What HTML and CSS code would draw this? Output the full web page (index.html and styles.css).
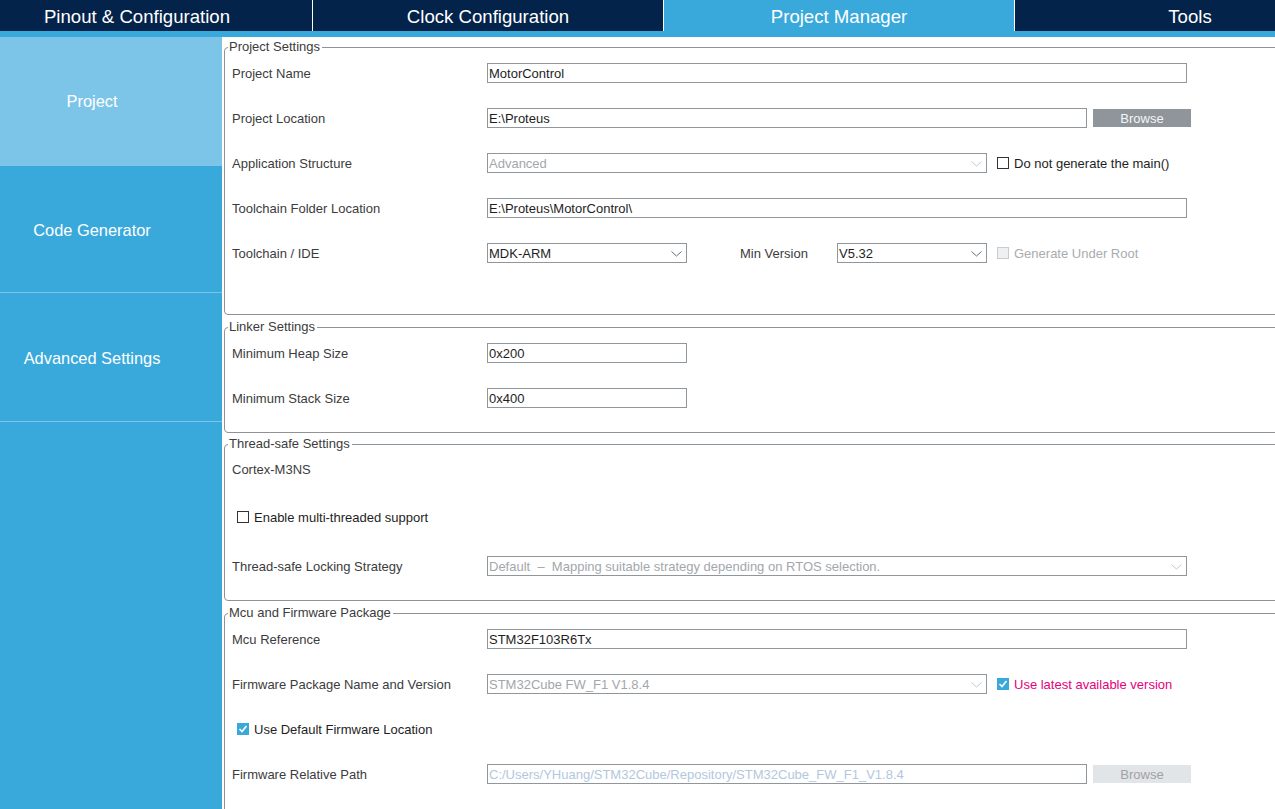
FILE: index.html
```html
<!DOCTYPE html>
<html>
<head>
<meta charset="utf-8">
<link rel="stylesheet" href="styles.css">
</head>
<body>
<div class="tabs">
  <div class="tab">Pinout &amp; Configuration</div>
  <div class="tab">Clock Configuration</div>
  <div class="tab active">Project Manager</div>
  <div class="tab">Tools</div>
</div>
<div class="strip"></div>
<div class="body">
  <nav class="side">
    <div class="item active i1">Project</div>
    <div class="item i2">Code Generator</div>
    <div class="item i3">Advanced Settings</div>
  </nav>
  <main class="content">
    <fieldset class="group g1">
      <legend>Project Settings</legend>
      <div class="row">
        <div class="label">Project Name</div>
        <div class="field w700">MotorControl</div>
      </div>
      <div class="row">
        <div class="label">Project Location</div>
        <div class="field w600">E:\Proteus</div>
        <div class="btn">Browse</div>
      </div>
      <div class="row">
        <div class="label">Application Structure</div>
        <div class="field select w500 disabled">Advanced<svg class="chev" width="11" height="6" viewBox="0 0 11 6"><polyline points="0.5,0.5 5.5,5 10.5,0.5" fill="none" stroke="#c4c7ca" stroke-width="1"/></svg></div>
        <div class="check"><span class="box"></span><span class="ctext">Do not generate the main()</span></div>
      </div>
      <div class="row">
        <div class="label">Toolchain Folder Location</div>
        <div class="field w700">E:\Proteus\MotorControl\</div>
      </div>
      <div class="row">
        <div class="label">Toolchain / IDE</div>
        <div class="field select w200">MDK-ARM<svg class="chev" width="11" height="6" viewBox="0 0 11 6"><polyline points="0.5,0.5 5.5,5 10.5,0.5" fill="none" stroke="#6a6f74" stroke-width="1"/></svg></div>
        <div class="label minv">Min Version</div>
        <div class="field select w150">V5.32<svg class="chev" width="11" height="6" viewBox="0 0 11 6"><polyline points="0.5,0.5 5.5,5 10.5,0.5" fill="none" stroke="#6a6f74" stroke-width="1"/></svg></div>
        <div class="check dis"><span class="box"></span><span class="ctext">Generate Under Root</span></div>
      </div>
    </fieldset>

    <fieldset class="group g2">
      <legend>Linker Settings</legend>
      <div class="row">
        <div class="label">Minimum Heap Size</div>
        <div class="field w200">0x200</div>
      </div>
      <div class="row">
        <div class="label">Minimum Stack Size</div>
        <div class="field w200">0x400</div>
      </div>
    </fieldset>

    <fieldset class="group g3">
      <legend>Thread-safe Settings</legend>
      <div class="row">
        <div class="label">Cortex-M3NS</div>
      </div>
      <div class="row r-check">
        <div class="check"><span class="box"></span><span class="ctext">Enable multi-threaded support</span></div>
      </div>
      <div class="row r-lock">
        <div class="label">Thread-safe Locking Strategy</div>
        <div class="field select w700 disabled">Default &nbsp;&#8211;&nbsp; Mapping suitable strategy depending on RTOS selection.<svg class="chev" width="11" height="6" viewBox="0 0 11 6"><polyline points="0.5,0.5 5.5,5 10.5,0.5" fill="none" stroke="#c4c7ca" stroke-width="1"/></svg></div>
      </div>
    </fieldset>

    <fieldset class="group g4">
      <legend>Mcu and Firmware Package</legend>
      <div class="row">
        <div class="label">Mcu Reference</div>
        <div class="field w700">STM32F103R6Tx</div>
      </div>
      <div class="row">
        <div class="label">Firmware Package Name and Version</div>
        <div class="field select w500 disabled">STM32Cube FW_F1 V1.8.4<svg class="chev" width="11" height="6" viewBox="0 0 11 6"><polyline points="0.5,0.5 5.5,5 10.5,0.5" fill="none" stroke="#c4c7ca" stroke-width="1"/></svg></div>
        <div class="check pink"><span class="box on"><svg width="12" height="12" viewBox="0 0 12 12"><polyline points="2.5,6 5,8.5 9.5,3" fill="none" stroke="#fff" stroke-width="1.6"/></svg></span><span class="ctext">Use latest available version</span></div>
      </div>
      <div class="row">
        <div class="check"><span class="box on"><svg width="12" height="12" viewBox="0 0 12 12"><polyline points="2.5,6 5,8.5 9.5,3" fill="none" stroke="#fff" stroke-width="1.6"/></svg></span><span class="ctext">Use Default Firmware Location</span></div>
      </div>
      <div class="row">
        <div class="label">Firmware Relative Path</div>
        <div class="field w600 path">C:/Users/YHuang/STM32Cube/Repository/STM32Cube_FW_F1_V1.8.4</div>
        <div class="btn btn-dis">Browse</div>
      </div>
    </fieldset>
  </main>
</div>
</body>
</html>
```

FILE: styles.css
```css
html, body {
  margin: 0;
  padding: 0;
}
body {
  width: 1275px;
  height: 809px;
  overflow: hidden;
  background: #ffffff;
  font-family: "Liberation Sans", Arial, sans-serif;
}

.tabs {
  display: flex;
  height: 31px;
  background: #03234b;
  margin-left: -38px;
  width: 1500px;
}
.tab {
  flex: none;
  width: 350px;
  height: 31px;
  line-height: 34px;
  text-align: center;
  color: #ffffff;
  font-size: 18.6px;
  border-right: 1px solid #ffffff;
}
.tab.active {
  background: #39a9dc;
}
.strip {
  height: 6px;
  background: #39a9dc;
}

.body {
  display: flex;
  height: 772px;
}
.side {
  flex: none;
  width: 222px;
  background: #39a9dc;
}
.item {
  display: flex;
  align-items: center;
  justify-content: center;
  padding-right: 38px;
  color: #ffffff;
  font-size: 16.4px;
  box-sizing: border-box;
}
.item.active {
  background: #7dc5e8;
}
.i1 { height: 129px; }
.i2 { height: 127px; border-bottom: 1px solid #7cc4e8; padding-top: 2px; }
.i3 { height: 129px; border-bottom: 1px solid #7cc4e8; padding-top: 2px; }

.content {
  flex: 1;
  overflow: hidden;
  padding-left: 2px;
}

.group {
  margin: 0 -20px 0 0;
  border: 1px solid #8d9398;
  border-radius: 4px;
  padding: 0 0 0 7px;
  min-width: 0;
}
.group legend {
  font-size: 13px;
  line-height: 14px;
  color: #3c3c3c;
  padding: 0 2px 0 1px;
  margin-left: -4px;
}
.g1 { margin-top: 3px; padding-top: 9px; padding-bottom: 51px; }
.g2 { margin-top: 5px; padding-top: 9px; padding-bottom: 24px; }
.g3 { margin-top: 4px; padding-top: 8px; padding-bottom: 24px; }
.g4 { margin-top: 5px; padding-top: 9px; padding-bottom: 30px; }

.row {
  display: flex;
  align-items: center;
  height: 20px;
  font-size: 13px;
}
.row + .row {
  margin-top: 25px;
}
.g3 .r-check { margin-top: 28px; }
.g3 .r-lock { margin-top: 29px; }

.label {
  flex: none;
  width: 255px;
  color: #3c3c3c;
  white-space: nowrap;
}
.label.minv {
  width: 97px;
  margin-left: 53px;
}

.field {
  flex: none;
  box-sizing: border-box;
  height: 20px;
  border: 1px solid #8f969c;
  padding: 1px 0 0 1px;
  line-height: 18px;
  color: #1e1e1e;
  white-space: nowrap;
  overflow: hidden;
  position: relative;
  background: #ffffff;
}
.w700 { width: 700px; }
.w600 { width: 600px; }
.w500 { width: 500px; }
.w200 { width: 200px; }
.w150 { width: 150px; }
.field.disabled { color: #a3a7ab; }
.field.path { color: #b3c7de; }
.field.select { padding-right: 24px; }
.chev {
  position: absolute;
  right: 4px;
  top: 7px;
}

.btn {
  flex: none;
  margin-left: 6px;
  width: 98px;
  height: 18px;
  line-height: 19px;
  text-align: center;
  background: #8f959a;
  color: #f4f5f6;
  font-size: 13px;
}
.btn.btn-dis {
  background: #e2e5e8;
  color: #9da2a7;
}

.check {
  display: flex;
  align-items: center;
  margin-left: 10px;
  color: #1e1e1e;
  white-space: nowrap;
}
.row > .check:first-child {
  margin-left: 5px;
}
.box {
  flex: none;
  box-sizing: border-box;
  width: 12px;
  height: 12px;
  border: 1px solid #333333;
  background: #ffffff;
  margin-right: 5px;
  display: flex;
}
.box.on {
  border: none;
  background: #39a9dc;
}
.check.dis .box {
  border-color: #c9cccf;
  background: #eef0f2;
}
.check.dis { color: #a8acb0; }
.check.pink { color: #e5007d; }
```
